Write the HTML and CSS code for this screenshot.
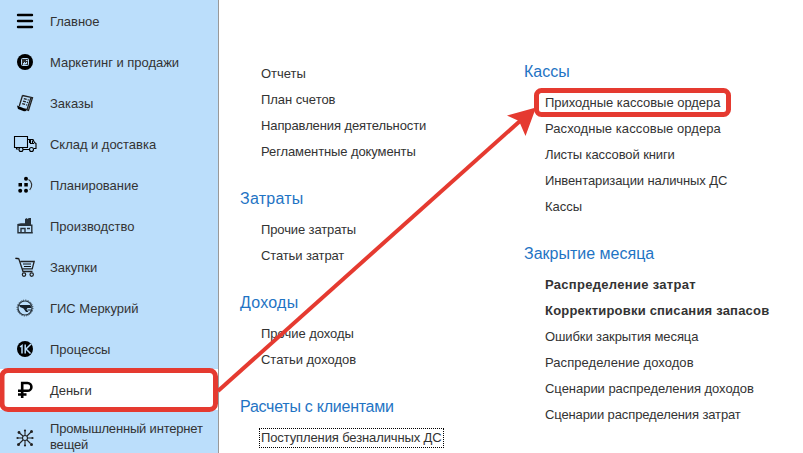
FILE: index.html
```html
<!DOCTYPE html>
<html lang="ru">
<head>
<meta charset="utf-8">
<title>Деньги</title>
<link rel="stylesheet" href="styles.css">
</head>
<body>
<div class="app">
  <nav class="sidebar">
    <a class="nav-item"><svg class="icon" viewBox="0 0 24 24"><path d="M5 6h14M5 12h14M5 18h14" stroke="#000" stroke-width="2.4" stroke-linecap="round"/></svg><span>Главное</span></a>
    <a class="nav-item"><svg class="icon" viewBox="0 0 24 24"><circle cx="12" cy="12" r="8"/><rect x="8.500" y="8.500" width="7" height="7" rx="1" fill="#333" stroke="#bbdefb"/><path d="M10 15v-2h1v-1h1v1h1v-1h1v2z" fill="#bbdefb"/><path d="M13 10.500h1.500" stroke="#bbdefb"/></svg><span>Маркетинг и продажи</span></a>
    <a class="nav-item"><svg class="icon" viewBox="0 0 24 24"><g fill="none" stroke="#222" stroke-width="1.300"><path d="M9.500 4.500l10 2.200-4 12.600-4-1.500M9.500 4.500L6.300 15M18 6.500l-4 12"/><path d="M10.800 7.600l5 1.500M10 10.100l5 1.500M9.200 12.600l5 1.500" stroke-dasharray="3 1"/></g><path d="M4 14.500l8 3.300 1.500 2.200-2.500.3-6-2.300z"/></svg><span>Заказы</span></a>
    <a class="nav-item"><svg class="icon" viewBox="0 0 24 24"><g fill="none" stroke="#000" stroke-width="1.100"><path d="M4.500 15.500h-3v-11h13v11h-13M3.500 15.500v1.500h2M10 17.500h6M15 7.500h5l1.500 3 1.500 1v5h-2M17.500 8v3.500H21"/><circle cx="8" cy="17.500" r="2"/><circle cx="18.500" cy="17.500" r="2"/></g><path d="M16 8h1v3h-1zM19 8.500h1v3h-1z"/></svg><span>Склад и доставка</span></a>
    <a class="nav-item"><svg class="icon" viewBox="0 0 24 24"><circle cx="13" cy="5.800" r="2"/><path d="M5.500 10h3.500v3.500H5.500zM11.300 10h3.500v3.500h-3.500z"/><circle cx="7.200" cy="17.700" r="2"/><circle cx="13" cy="17.700" r="2"/><path d="M15.500 6.500c3.500 2 4.500 7 1.200 10.300" fill="none" stroke="#333" stroke-width="1.200"/></svg><span>Планирование</span></a>
    <a class="nav-item"><svg class="icon" viewBox="0 0 24 24"><path d="M12 5l2-1v1l2-1h2v7h-6z" fill="#263038"/><path d="M5 18.800v-7.500h13.800v7.500M4.300 18.800h15.500M8 18.500v-4h4v4M14 14.500h3M5 12.800V10.500l3-.5h4" fill="none" stroke="#263038" stroke-width="1.400"/></svg><span>Производство</span></a>
    <a class="nav-item"><svg class="icon" viewBox="0 0 24 24"><path d="M2.500 3.300l3.300.5 4.200 12.700h9.500M7.500 6.500h13.700l-2 7.300H9.500" fill="none" stroke="#222" stroke-width="1.300"/><path d="M2.500 3.300h3M10 9h8M11 11.500h7" stroke="#111"/><g fill="none" stroke="#222" stroke-width="1.200"><circle cx="11" cy="19.600" r="1.700"/><circle cx="18.700" cy="19.600" r="1.700"/></g></svg><span>Закупки</span></a>
    <a class="nav-item"><svg class="icon" viewBox="0 0 24 24"><circle cx="12" cy="12" r="7" fill="none" stroke="#26323b" stroke-width="1.200"/><circle cx="12" cy="12" r="7.900" fill="none" stroke="#26323b" stroke-width="1" stroke-dasharray="1.240 1.240"/><path d="M6 9h11.500l1 3h-4l-1 1.500 2 2.500h-2.500l-2.500-3.500-3.500-1.500z" fill="#17212a"/><path d="M14.500 14h3.500" stroke="#17212a"/></svg><span>ГИС Меркурий</span></a>
    <a class="nav-item"><svg class="icon" viewBox="0 0 24 24"><circle cx="12" cy="12" r="8"/><path d="M7 10L9 8.500v8M12.200 7.500v9M18 7L13 12l4.500 4.500" fill="none" stroke="#bbdefb" stroke-width="1.500"/></svg><span>Процессы</span></a>
    <a class="nav-item nav-item--active"><svg class="icon" viewBox="0 0 24 24"><path d="M9.200 20V5h5.300a3.900 3.900 0 0 1 0 7.800H5M5 16.500h8.500" fill="none" stroke="#000" stroke-width="2.600"/></svg><span>Деньги</span></a>
    <a class="nav-item nav-item--tall"><svg class="icon" viewBox="0 0 24 24"><g fill="none" stroke="#222" stroke-width="1.100"><circle cx="12" cy="12" r="2.500"/><path d="M12 9.500V5M12 14.500V19M9.500 12H5M14.500 12H19M10 10L6.500 7M14 10l4-4M10 14l-4 4M14 14l3.500 3.500"/></g><g fill="#222"><circle cx="12" cy="4.500" r="1.100"/><circle cx="12" cy="19.500" r="1.100"/><circle cx="4.500" cy="12" r="1.100"/><circle cx="19.500" cy="12" r="1.100"/><circle cx="6" cy="6.500" r="1.400"/><circle cx="18.500" cy="5.500" r="1.500"/><circle cx="5.500" cy="18.500" r="1.500"/><circle cx="18.500" cy="18.500" r="1.500"/></g></svg><span>Промышленный интернет вещей</span></a>
  </nav>
  <main class="content">
    <div class="column column--left">
      <section class="group"><ul>
        <li>Отчеты</li><li>План счетов</li><li>Направления деятельности</li><li class="tight">Регламентные документы</li>
      </ul></section>
      <section class="group"><h2 class="wide">Затраты</h2><ul><li class="tight">Прочие затраты</li><li class="tight">Статьи затрат</li></ul></section>
      <section class="group"><h2 class="wide">Доходы</h2><ul><li>Прочие доходы</li><li>Статьи доходов</li></ul></section>
      <section class="group"><h2 class="narrow">Расчеты с клиентами</h2><ul><li class="tight"><span class="focused">Поступления безналичных ДС</span></li></ul></section>
    </div>
    <div class="column column--right">
      <section class="group"><h2>Кассы</h2><ul>
        <li>Приходные кассовые ордера</li><li class="loose">Расходные кассовые ордера</li><li>Листы кассовой книги</li><li>Инвентаризации наличных ДС</li><li>Кассы</li>
      </ul></section>
      <section class="group"><h2>Закрытие месяца</h2><ul>
        <li class="important important--loose">Распределение затрат</li><li class="important">Корректировки списания запасов</li><li>Ошибки закрытия месяца</li><li class="loose">Распределение доходов</li><li>Сценарии распределения доходов</li><li class="tight">Сценарии распределения затрат</li>
      </ul></section>
    </div>
  </main>
  <svg class="annotation" viewBox="0 0 803 453">
    <rect x="2" y="370.500" width="213.500" height="39" rx="6"/>
    <rect x="536.500" y="90.500" width="192" height="24" rx="5"/>
    <path d="M218 391L520 121"/>
    <path class="arrowhead" d="M536 107.500L507 115.500L519 121L525.500 136z"/>
  </svg>
</div>
</body>
</html>
```
FILE: styles.css
```css
* { box-sizing: border-box; }
body {
  margin: 0;
  background: #fff;
  color: #333;
  font: 13px/16px "Liberation Sans", Arial, sans-serif;
  letter-spacing: -0.03px;
}
.app {
  position: relative;
  display: flex;
  width: 803px;
  height: 453px;
  overflow: hidden;
}
.sidebar {
  flex: none;
  width: 219px;
  background: #bbdefb;
  border-right: 1px solid #999;
}
.nav-item {
  display: flex;
  align-items: center;
  gap: 13px;
  height: 41px;
  padding: 1px 8px 0 13px;
}
.nav-item span { padding-top: 2px; }
.nav-item--active { background: #fff; }
.nav-item--tall { height: 54px; letter-spacing: -0.18px; }
.nav-item--tall span { padding: 0 0 2px; }
.icon { flex: none; width: 24px; height: 24px; }
.content { display: flex; flex: 1; padding-left: 21px; }
.column--left { width: 284px; padding-top: 61px; }
.column--right { flex: 1; padding-top: 52px; }
.group { margin-bottom: 14px; }
h2 {
  margin: 0;
  height: 38px;
  font-size: 16px;
  font-weight: 400;
  line-height: 40px;
  letter-spacing: 0;
  color: #1f74c4;
}
.wide { letter-spacing: 0.25px; }
.narrow { letter-spacing: -0.25px; }
ul { margin: 0; padding: 0 0 0 21px; list-style: none; }
li { height: 26px; line-height: 26px; white-space: nowrap; }
li:nth-child(3):not(.important), li:nth-child(4):not(.loose) { letter-spacing: -0.1px; }
.tight { letter-spacing: -0.12px; }
.loose { letter-spacing: 0.06px; }
.important { font-weight: 700; letter-spacing: 0.2px; }
.important--loose { letter-spacing: 0.3px; }
.focused {
  display: inline-block;
  height: 20px;
  margin-left: -2px;
  padding: 0 1px;
  border: 1px dotted #000;
  line-height: 18px;
}
.annotation {
  position: absolute;
  inset: 0;
  fill: none;
  stroke: #e53a30;
  stroke-width: 5;
}
.annotation path { stroke-width: 4; }
.annotation .arrowhead { fill: #e53a30; stroke: none; }
```
